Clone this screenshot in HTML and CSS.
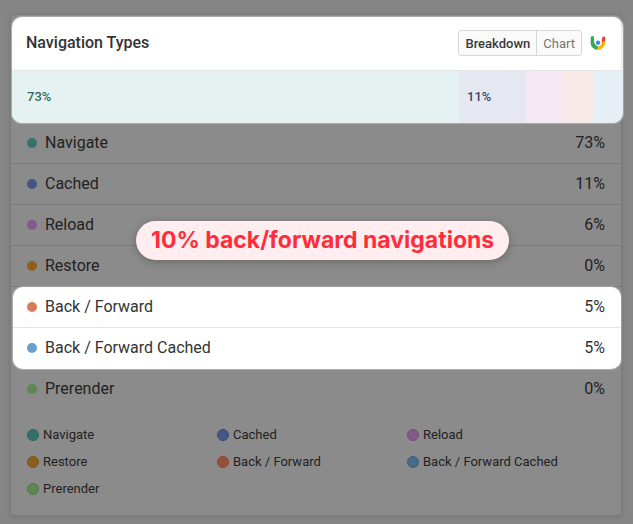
FILE: index.html
```html
<!DOCTYPE html>
<html lang="en">
<head>
    <meta charset="UTF-8">
    <meta name="viewport" content="width=device-width, initial-scale=1.0">
    <title>Navigation Types</title>
    <link rel="stylesheet" href="styles.css">
</head>
<body>
    <main class="card">
        <section class="spotlight summary">
            <header class="header">
                <h2>Navigation Types</h2>
                <div class="toggle">
                    <button type="button" class="active">Breakdown</button>
                    <button type="button">Chart</button>
                </div>
                <svg class="logo" width="16" height="16" viewBox="0 0 16 16">
                    <path d="M2.4 2.8v4.400a5.600 5.600 0 0 0 3.600 5.200" fill="none" stroke="#34a853" stroke-width="3.400" stroke-linecap="round"/>
                    <path d="M5.400 12.800c4.400 1.400 8.200-1.200 8.200-6.300" fill="none" stroke="#fbb404" stroke-width="3.400"/>
                    <path d="M.7 7c0 4.300 2.600 7 6 7.600l1.100-3.300C5.500 11 4.100 9.500 4.100 7z" fill="#34a853"/>
                    <path d="M11.900 7.400V4.200c0-1.500.8-2.600 2-2.600.9 0 1.400.6 1.400 1.500v3z" fill="#ea4335"/>
                    <circle cx="8" cy="7.800" r="2.200" fill="#4285f4"/>
                </svg>
            </header>
            <div class="bar">
                <div class="segment navigate" style="flex-grow: 73.4">73%</div>
                <div class="segment cached" style="flex-grow: 11">11%</div>
                <div class="segment reload" style="flex-grow: 6.1"></div>
                <div class="segment forward" style="flex-grow: 4.9"></div>
                <div class="segment forward-cached" style="flex-grow: 4.6"></div>
            </div>
        </section>

        <ul class="rows">
            <li><span class="dot navigate"></span>Navigate<span class="value">73%</span></li>
            <li><span class="dot cached"></span>Cached<span class="value">11%</span></li>
            <li><span class="dot reload"></span>Reload<span class="value">6%</span></li>
            <li><span class="dot restore"></span>Restore<span class="value">0%</span></li>
        </ul>
        <ul class="rows spotlight">
            <li><span class="dot forward"></span>Back / Forward<span class="value">5%</span></li>
            <li><span class="dot forward-cached"></span>Back / Forward Cached<span class="value">5%</span></li>
        </ul>
        <ul class="rows">
            <li><span class="dot prerender"></span>Prerender<span class="value">0%</span></li>
        </ul>

        <ul class="legend">
            <li><span class="dot navigate"></span>Navigate</li>
            <li><span class="dot cached"></span>Cached</li>
            <li><span class="dot reload"></span>Reload</li>
            <li><span class="dot restore"></span>Restore</li>
            <li><span class="dot forward"></span>Back / Forward</li>
            <li><span class="dot forward-cached"></span>Back / Forward Cached</li>
            <li><span class="dot prerender"></span>Prerender</li>
        </ul>

        <div class="callout">10% back/forward navigations</div>
    </main>
</body>
</html>
```
FILE: styles.css
```css
* {
    box-sizing: border-box;
}
body {
    margin: 0;
    padding: 14px 11px 8px 10px;
    background-color: #858585;
    color: #222;
    font-family: Roboto, Arial, sans-serif;
    font-size: 16px;
    line-height: 20px;
}
ul {
    list-style: none;
    margin: 0;
    padding: 0;
}
.card {
    position: relative;
    padding-top: 2px;
    background-color: #8b8b8b;
    border: 1px solid #7b7b7b;
    border-radius: 4px;
    box-shadow: 0 1px 4px rgba(0, 0, 0, 0.1);
}
.spotlight {
    background-color: #fff;
    border-radius: 10px;
    box-shadow: 0 0 1px 1px rgba(255, 255, 255, 0.3);
    color: #333;
    overflow: hidden;
}

/* summary */
.summary {
    margin: 0 -2px 0 1px;
    border-right: 2px solid #e9ebec;
}
.header {
    display: flex;
    align-items: center;
    height: 54px;
    padding: 0 15px 1px 14px;
    border-bottom: 1px solid #e1e7e7;
}
h2 {
    flex: 1;
    margin: 0;
    font-size: 16px;
    font-weight: 500;
}
.toggle {
    display: flex;
    margin-right: 8px;
    border: 1px solid #d5d8da;
    border-radius: 3px;
    background-color: #fafafa;
}
.toggle button {
    height: 24px;
    padding: 0 6px;
    border: none;
    background: none;
    color: #757575;
    font-family: inherit;
    font-size: 13px;
}
.toggle button + button {
    border-left: 1px solid #d5d8da;
}
.toggle .active {
    color: #37393c;
    font-weight: 500;
}
.bar {
    display: flex;
    height: 52px;
}
.segment {
    flex: 1 1 0;
    min-width: 0;
    font-size: 13px;
    font-weight: 500;
    line-height: 52px;
    text-indent: 8px;
}
.segment.navigate { text-indent: 15px; background-color: #e5f2f1; color: #35695f; }
.segment.cached { background-color: #e6e8f1; color: #394468; }
.segment.reload { background-color: #f5eaf4; }
.segment.forward { background-color: #f8eae6; }
.segment.forward-cached { background-color: #e7eff6; }

/* list */
.rows li {
    display: flex;
    align-items: center;
    height: 41px;
    padding: 0 16px;
    border-bottom: 1px solid #7b7b7b;
}
.rows.spotlight {
    margin: 0 0 0 2px;
}
.rows.spotlight li {
    padding-left: 14px;
    border-color: #e6e6e6;
}
.rows.spotlight li:last-child,
.rows:nth-of-type(3) li {
    border-color: transparent;
}
.value {
    margin-left: auto;
}
.dot {
    flex: none;
    width: 10px;
    height: 10px;
    margin-right: 8px;
    border-radius: 50%;
}
.dot.navigate { background-color: #35716a; border-color: #2e655f; }
.dot.cached { background-color: #455684; border-color: #394a78; }
.dot.reload { background-color: #85588a; border-color: #764c7c; }
.dot.restore { background-color: #8c601c; border-color: #7d5515; }
.dot.forward { background-color: #95503b; border-color: #884630; }
.dot.forward-cached { background-color: #446b8a; border-color: #3a607f; }
.dot.prerender { background-color: #5d8650; border-color: #527846; }
.spotlight .dot.forward { background-color: #d97b5b; }
.spotlight .dot.forward-cached { background-color: #689fcd; }

/* legend */
.legend {
    display: grid;
    grid-template-columns: 190px 190px 1fr;
    row-gap: 11px;
    padding: 17px 16px 18px;
    font-size: 13px;
    line-height: 16px;
}
.legend li {
    display: flex;
    align-items: center;
}
.legend .dot {
    width: 12px;
    height: 12px;
    margin-right: 4px;
    border-width: 1px;
    border-style: solid;
}

.callout {
    position: absolute;
    top: 206px;
    left: 125px;
    padding: 0 15px;
    border-radius: 20px;
    background-color: #ffedef;
    box-shadow: 0 2px 8px rgba(0, 0, 0, 0.25);
    color: #ff2d3b;
    font-family: Inter, sans-serif;
    font-size: 23px;
    font-weight: 700;
    line-height: 39px;
    white-space: nowrap;
}
```
